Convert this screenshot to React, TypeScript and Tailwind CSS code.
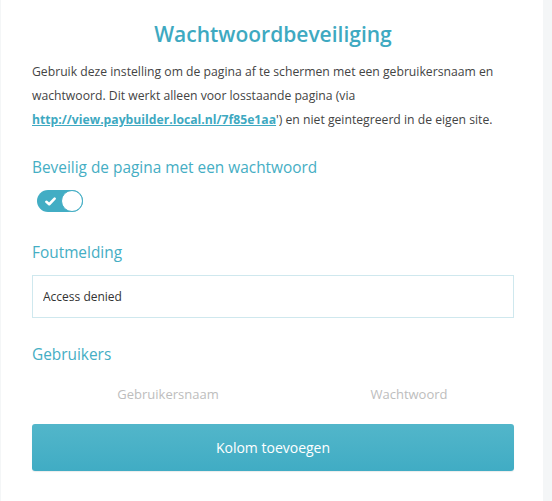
import * as React from "react";

function Toggle({ on, onChange }: { on: boolean; onChange: (v: boolean) => void }) {
  return (
    <button
      type="button"
      onClick={() => onChange(!on)}
      className={`relative flex h-[22px] w-[46px] items-center rounded-full ${on ? "bg-[#42adc4]" : "bg-[#d5d9db]"}`}
    >
      <svg viewBox="0 0 12 12" className="absolute left-[8px] h-[11px] w-[11px]">
        <path d="M1.5 6.3 L4.6 9 L10.5 2.8" fill="none" stroke="white" strokeWidth="2.8" strokeLinecap="round" strokeLinejoin="round" />
      </svg>
      <span
        className={`absolute top-0 h-[22px] w-[22px] rounded-full border border-[#42adc4] bg-white ${on ? "right-0" : "left-0"}`}
      />
    </button>
  );
}

export default function App() {
  const [locked, setLocked] = React.useState(true);
  const [message, setMessage] = React.useState("Access denied");

  return (
    <div className="min-h-[501px] bg-[#f4f6f7] px-px font-['Open_Sans',sans-serif]">
      <main className="mr-[8px] min-h-[501px] bg-white pl-[31px] pr-[29px] pt-[19px] pb-[30px]">
        <h1 className="text-center text-[21px] font-semibold leading-[30px] text-[#3ea9c1]">
          Wachtwoordbeveiliging
        </h1>
        <p className="mt-[11px] text-[12.2px] leading-[24px] text-[#444]">
          Gebruik deze instelling om de pagina af te schermen met een gebruikersnaam en wachtwoord. Dit werkt alleen voor losstaande pagina (via{" "}
          <a href="#" className="font-bold text-[#3ea9c1] underline">http://view.paybuilder.local.nl/7f85e1aa</a>') en niet geintegreerd in de eigen site.
        </p>

        <h2 className="mt-[25px] text-[15.4px] leading-[22px] text-[#45aec4]">Beveilig de pagina met een wachtwoord</h2>
        <div className="mt-[11px] pl-[5px]">
          <Toggle on={locked} onChange={setLocked} />
        </div>

        <h2 className="mt-[30px] text-[15.4px] leading-[22px] text-[#45aec4]">Foutmelding</h2>
        <input
          value={message}
          onChange={(e) => setMessage(e.target.value)}
          className="mt-[11px] h-[43px] w-full border border-[#cfe8ee] px-[10px] text-[12px] text-[#333] outline-none"
        />

        <h2 className="mt-[26px] text-[15.4px] leading-[22px] text-[#45aec4]">Gebruikers</h2>
        <div className="mt-[18px] grid grid-cols-[272px_1fr] text-[13px] leading-[20px] text-[#bdbdbd]">
          <div className="text-center">Gebruikersnaam</div>
          <div className="text-center">Wachtwoord</div>
        </div>

        <button
          type="button"
          className="mt-[20px] h-[47px] w-full rounded-[3px] bg-gradient-to-b from-[#52b6ca] to-[#40acc4] text-[14px] text-white shadow-[0_1px_1px_rgba(0,0,0,0.08)]"
        >
          Kolom toevoegen
        </button>
      </main>
    </div>
  );
}
